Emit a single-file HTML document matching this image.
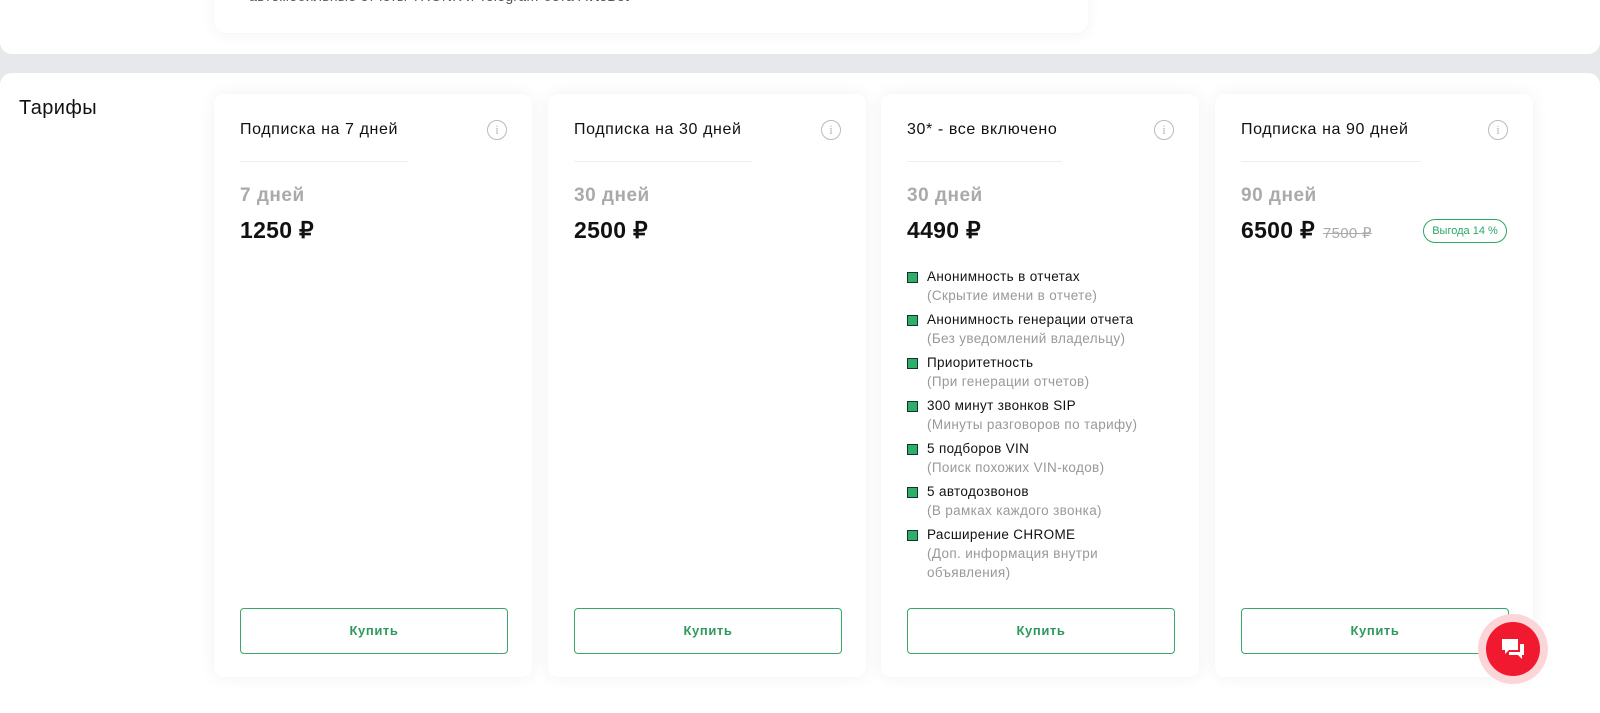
<!DOCTYPE html>
<html><head><meta charset="utf-8"><style>
*{box-sizing:border-box;margin:0;padding:0}
body{width:1600px;height:691px;overflow:hidden;background:#e7e8eb;font-family:"Liberation Sans",sans-serif;position:relative}
.top{position:absolute;left:0;top:-20px;width:1600px;height:74px;background:#fff;border-radius:0 0 12px 12px}
.topcard{position:absolute;left:214px;top:-20px;width:874px;height:53px;background:#fff;border-radius:0 0 12px 12px;box-shadow:0 2px 14px rgba(0,0,0,.05)}
.topcard span{position:absolute;left:26px;top:9px;font-size:14px;color:#555;line-height:14px;white-space:nowrap;letter-spacing:.3px}
.bot{position:absolute;left:0;top:73px;width:1600px;height:640px;background:#fff;border-radius:12px 12px 0 0}
.h{position:absolute;left:19px;top:97px;font-size:20px;color:#111;letter-spacing:.4px}
.card{position:absolute;top:94px;width:318px;height:583px;background:#fff;border-radius:10px;box-shadow:0 0 18px rgba(0,0,0,.06)}
.t{position:absolute;left:26px;top:27px;font-size:16px;color:#111;letter-spacing:.6px}
.line{position:absolute;left:26px;top:67px;width:168px;border-top:1px solid #eee}
.i{position:absolute;right:25px;top:26px;width:20px;height:20px;border:1.3px solid #bbb;border-radius:50%;color:#bbb;font-size:13px;text-align:center;line-height:18px;font-family:"Liberation Serif",serif}
.d{position:absolute;left:26px;top:91px;font-size:19px;font-weight:bold;color:#aaa;letter-spacing:.5px}
.p{position:absolute;left:26px;top:123px;font-size:23px;font-weight:bold;color:#111;letter-spacing:.3px}
.p s{font-size:15px;color:#aaa;font-weight:normal;margin-left:8px}
.badge{position:absolute;right:26px;top:125px;height:24px;width:84px;border:1px solid #2aa865;border-radius:12px;font-size:11px;color:#2aa865;text-align:center;line-height:22px}
.btn{position:absolute;left:26px;top:514px;width:268px;height:46px;border:1px solid #3aa66a;border-radius:4px;text-align:center;line-height:44px;font-size:13px;color:#2f9a5e;font-weight:bold;letter-spacing:.6px}
ul{position:absolute;left:26px;top:173px;list-style:none;width:280px}
li{position:relative;padding-left:20px;font-size:13.5px;color:#111;line-height:19px;margin-bottom:5px;letter-spacing:.35px}
li:before{content:"";position:absolute;left:0;top:5px;width:9px;height:9px;background:#2fae68;border:1px solid #133}
li em{display:block;font-style:normal;color:#999}
.chat{position:absolute;left:1478px;top:614px;width:70px;height:70px;border-radius:50%;background:#fcd5d9}
.chat div{position:absolute;left:8px;top:8px;width:54px;height:54px;border-radius:50%;background:#f0192f}
</style></head><body>
<div class="top"></div>
<div class="topcard"><span>› автомобильные отчеты TRONK и Telegram-бота AvtoBot</span></div>
<div class="bot"></div>
<div class="h">Тарифы</div>

<div class="card" style="left:214px"><div class="t">Подписка на 7 дней</div><div class="line"></div><div class="i">i</div><div class="d">7 дней</div><div class="p">1250 ₽</div><div class="btn">Купить</div></div>
<div class="card" style="left:548px"><div class="t">Подписка на 30 дней</div><div class="line" style="width:178px"></div><div class="i">i</div><div class="d">30 дней</div><div class="p">2500 ₽</div><div class="btn">Купить</div></div>
<div class="card" style="left:881px"><div class="t">30* - все включено</div><div class="line" style="width:155px"></div><div class="i">i</div><div class="d">30 дней</div><div class="p">4490 ₽</div>
<ul>
<li>Анонимность в отчетах<em>(Скрытие имени в отчете)</em></li>
<li>Анонимность генерации отчета<em>(Без уведомлений владельцу)</em></li>
<li>Приоритетность<em>(При генерации отчетов)</em></li>
<li>300 минут звонков SIP<em>(Минуты разговоров по тарифу)</em></li>
<li>5 подборов VIN<em>(Поиск похожих VIN-кодов)</em></li>
<li>5 автодозвонов<em>(В рамках каждого звонка)</em></li>
<li>Расширение CHROME<em>(Доп. информация внутри<br>объявления)</em></li>
</ul>
<div class="btn">Купить</div></div>
<div class="card" style="left:1215px"><div class="t">Подписка на 90 дней</div><div class="line" style="width:180px"></div><div class="i">i</div><div class="d">90 дней</div><div class="p">6500 ₽<s>7500 ₽</s></div><div class="badge">Выгода 14 %</div><div class="btn">Купить</div></div>

<div class="chat"><div><svg width="54" height="54" viewBox="0 0 54 54"><path d="M16 17h16v11h-9l-4 4v-4h-3z" fill="#fff"/><path d="M34 22h4v11h-2v4l-4-4h-9v-3h11z" fill="#fff"/></svg></div></div>
</body></html>
